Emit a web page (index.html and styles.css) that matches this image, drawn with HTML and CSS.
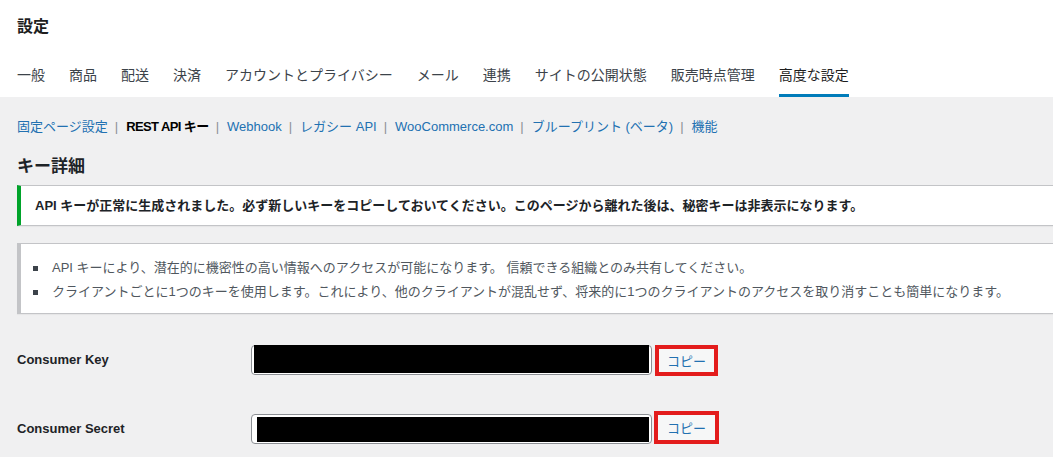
FILE: index.html
```html
<!DOCTYPE html>
<html lang="ja">
<head>
    <meta charset="UTF-8">
    <meta name="viewport" content="width=device-width, initial-scale=1.0">
    <title>設定 - REST API キー</title>
    <link rel="stylesheet" href="styles.css">
</head>
<body>
    <header class="header">
        <h1 class="page-title">設定</h1>
        <nav class="tabs">
            <a class="tab" href="#">一般</a>
            <a class="tab" href="#">商品</a>
            <a class="tab" href="#">配送</a>
            <a class="tab" href="#">決済</a>
            <a class="tab" href="#">アカウントとプライバシー</a>
            <a class="tab" href="#">メール</a>
            <a class="tab" href="#">連携</a>
            <a class="tab" href="#">サイトの公開状態</a>
            <a class="tab" href="#">販売時点管理</a>
            <a class="tab tab-active" href="#">高度な設定</a>
        </nav>
    </header>

    <main class="content">
        <ul class="sublinks">
            <li><a href="#">固定ページ設定</a><span class="sep">|</span></li>
            <li><span class="current">REST API キー</span><span class="sep">|</span></li>
            <li><a href="#">Webhook</a><span class="sep">|</span></li>
            <li><a href="#">レガシー API</a><span class="sep">|</span></li>
            <li><a href="#">WooCommerce.com</a><span class="sep">|</span></li>
            <li><a href="#">ブループリント (ベータ)</a><span class="sep">|</span></li>
            <li><a href="#">機能</a></li>
        </ul>

        <h2 class="section-title">キー詳細</h2>

        <div class="notice notice-success">
            <p>API キーが正常に生成されました。必ず新しいキーをコピーしておいてください。このページから離れた後は、秘密キーは非表示になります。</p>
        </div>

        <div class="notice notice-info">
            <ul class="info-list">
                <li>API キーにより、潜在的に機密性の高い情報へのアクセスが可能になります。 信頼できる組織とのみ共有してください。</li>
                <li>クライアントごとに1つのキーを使用します。これにより、他のクライアントが混乱せず、将来的に1つのクライアントのアクセスを取り消すことも簡単になります。</li>
            </ul>
        </div>

        <div class="form-table">
            <div class="form-row">
                <label class="form-label">Consumer Key</label>
                <div class="key-field">
                    <span class="redact redact-key"></span>
                </div>
                <button class="copy-btn">コピー</button>
            </div>
            <div class="form-row">
                <label class="form-label">Consumer Secret</label>
                <div class="key-field">
                    <span class="redact redact-secret"></span>
                </div>
                <button class="copy-btn copy-btn-wide">コピー</button>
            </div>
        </div>
    </main>
</body>
</html>
```

FILE: styles.css
```css
html {
    overflow-x: hidden;
}
body {
    font-family: "Liberation Sans", "Noto Sans CJK JP", sans-serif;
    font-size: 13px;
    background-color: #f0f0f1;
    color: #1d2327;
    margin: 0;
    padding: 0;
}
a {
    color: #2271b1;
    text-decoration: none;
}

/* ヘッダーとタブ */
.header {
    background-color: #fff;
    padding: 17px 17px 0;
}
.page-title {
    margin: 0;
    font-size: 16px;
    line-height: 20px;
    font-weight: 700;
    color: #1e1e1e;
}
.tabs {
    display: flex;
    gap: 24px;
}
.tab {
    font-size: 14px;
    line-height: 20px;
    color: #3c434a;
    padding: 28px 0 9px;
    border-bottom: 3px solid transparent;
}
.tab-active {
    color: #1e1e1e;
    border-bottom-color: #007cba;
}

/* 本文 */
.content {
    padding: 0 0 0 17px;
}
.sublinks {
    list-style: none;
    margin: 20px 0 0;
    padding: 0;
    display: flex;
    line-height: 20px;
}
.sublinks li {
    display: flex;
}
.sublinks .sep {
    color: #8c8f94;
    padding: 0 8px 0 7px;
}
.sublinks .current {
    color: #000;
    font-weight: 700;
    letter-spacing: -0.6px;
}
.section-title {
    margin: 19px 0 7px;
    font-size: 17px;
    line-height: 22px;
    font-weight: 700;
}

.notice {
    background-color: #fff;
    border: 1px solid #c3c4c7;
    border-left-width: 4px;
    box-shadow: 0 1px 1px rgba(0, 0, 0, 0.04);
    margin-right: -20px;
}
.notice p {
    margin: 0;
    padding: 10px 14px;
    line-height: 19px;
    font-weight: 700;
}
.notice-success {
    border-left-color: #00a32a;
}
.notice-info {
    margin-top: 17px;
    padding: 12px 12px 9px;
}
.info-list {
    list-style: none;
    margin: 0;
    padding: 0;
    color: #50575e;
    line-height: 24px;
}
.info-list li {
    display: flex;
    align-items: center;
}
.info-list li::before {
    content: "";
    width: 5px;
    height: 5px;
    background-color: #3c434a;
    margin-right: 14px;
    flex-shrink: 0;
}

/* キー入力欄 */
.form-table {
    margin-top: 31px;
    display: flex;
    flex-direction: column;
    gap: 39px;
}
.form-row {
    display: flex;
    align-items: flex-start;
    height: 30px;
}
.form-label {
    width: 234px;
    font-weight: 700;
    line-height: 30px;
    color: #1d2327;
}
.key-field {
    box-sizing: border-box;
    width: 401px;
    height: 30px;
    border: 1px solid #8c8f94;
    border-radius: 4px;
    background-color: #fff;
    display: flex;
}
.redact {
    flex: 1;
    background-color: #000;
}
.redact-key {
    margin: -1px 2px 1px 2px;
}
.redact-secret {
    margin: 2px 2px 1px 5px;
}
.copy-btn {
    box-sizing: border-box;
    margin-left: 3px;
    width: 63px;
    height: 31px;
    padding: 0;
    border: 4px solid #e31c1c;
    background-color: #f6f7f7;
    color: #2271b1;
    font-family: inherit;
    font-size: 13px;
    cursor: pointer;
}
.copy-btn-wide {
    margin-left: 2px;
    margin-top: -3px;
    width: 65px;
    height: 33px;
}
```
